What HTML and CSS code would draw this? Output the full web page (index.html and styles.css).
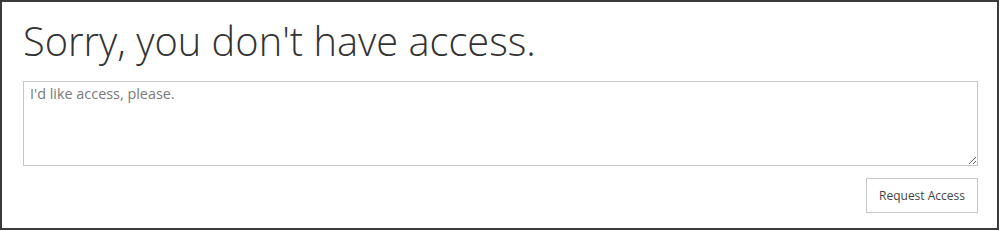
FILE: index.html
```html
<!DOCTYPE html>
<html lang="en">
<head>
    <meta charset="UTF-8">
    <title>Access Denied</title>
    <link rel="stylesheet" href="styles.css">
</head>
<body>
<div class="frame">
    <h1 class="title">Sorry, you don't have access.</h1>
    <!-- request message box -->
    <textarea class="request-msg" placeholder="I'd like access, please."></textarea>
    <div class="actions">
        <button class="request-button">Request Access</button>
    </div>
</div>
</body>
</html>
```

FILE: styles.css
```css
body {
    margin: 0;
    background: #fff;
    font-family: "Open Sans", sans-serif;
}

.frame {
    box-sizing: border-box;
    width: 999px;
    height: 230px;
    border: 2px solid #3a3a3a;
    padding: 0 20px 0 21px;
}

.title {
    margin: 12px 0 0 0;
    font-weight: 300;
    font-size: 39.8px;
    line-height: 54px;
    color: #333;
}

.request-msg {
    display: block;
    box-sizing: border-box;
    width: 955px;
    height: 85px;
    margin-top: 13px;
    padding: 2px 6px;
    border: 1px solid #c6c6c6;
    font-family: "Open Sans", sans-serif;
    font-size: 14.4px;
    color: #444;
    outline: none;
}

.request-msg::placeholder {
    color: #7a7a7a;
}

.actions {
    display: flex;
    justify-content: flex-end;
    width: 955px;
    margin-top: 12px;
}

.request-button {
    box-sizing: border-box;
    height: 35px;
    padding: 0 12px;
    background: #fff;
    border: 1px solid #c6c6c6;
    font-family: "Open Sans", sans-serif;
    font-size: 12px;
    color: #444;
}
```
